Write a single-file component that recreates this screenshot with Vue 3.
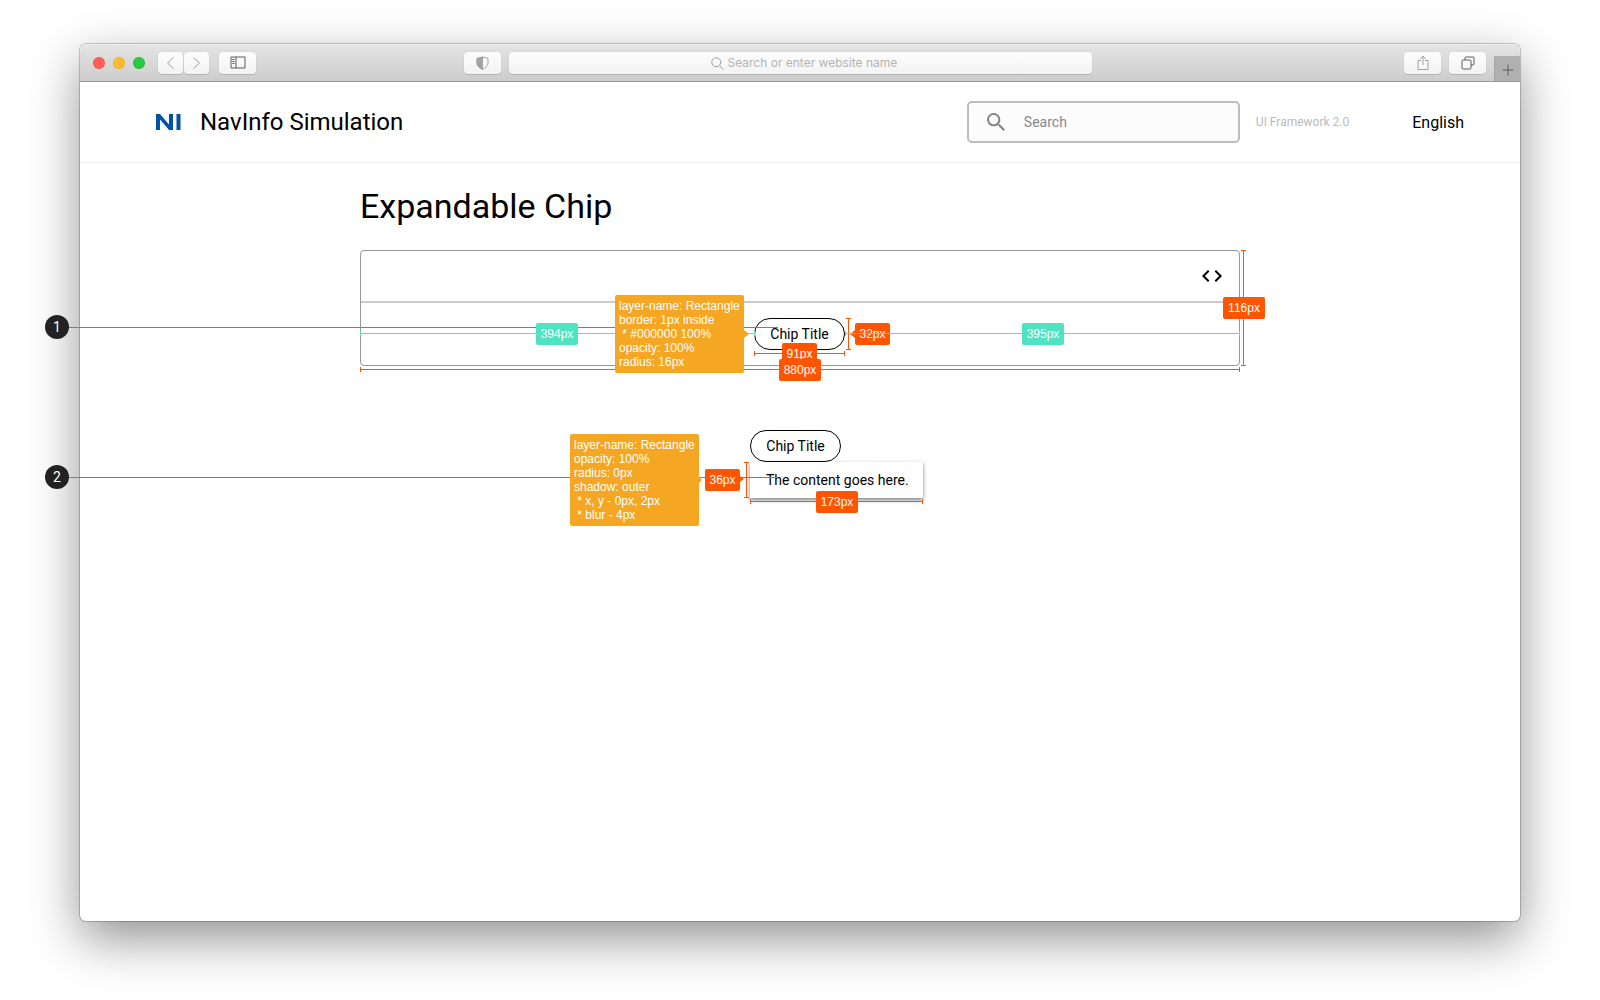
<script setup>
import { ref } from 'vue'

const address = ref('')
const query = ref('')
const expanded = ref(true)

const chipNote = ['layer-name: Rectangle', 'border: 1px inside', ' * #000000 100%', 'opacity: 100%', 'radius: 16px']
const contentNote = ['layer-name: Rectangle', 'opacity: 100%', 'radius: 0px', 'shadow: outer', ' * x, y - 0px, 2px', ' * blur - 4px']
</script>

<template>
  <div class="desktop">
    <div class="window">
      <div class="toolbar">
        <div class="group">
          <div class="lights">
            <button class="light red" type="button" aria-label="Close"></button>
            <button class="light yellow" type="button" aria-label="Minimise"></button>
            <button class="light green" type="button" aria-label="Zoom"></button>
          </div>
          <div class="nav">
            <button class="tool narrow" type="button" aria-label="Back">
              <svg width="9" height="14" viewBox="0 0 9 14"><path d="M7.500 1.500 1.500 7l6 5.500" /></svg>
            </button>
            <button class="tool narrow" type="button" aria-label="Forward">
              <svg width="9" height="14" viewBox="0 0 9 14"><path d="M1.500 1.500 7.500 7l-6 5.500" /></svg>
            </button>
          </div>
          <button class="tool dark" type="button" aria-label="Sidebar">
            <svg width="16" height="13" viewBox="0 0 16 13">
              <path d="M1 1h14v11H1zM6 1v11M2.500 3.500h2M2.500 5.500h2M2.500 7.500h2" />
            </svg>
          </button>
          <button class="tool privacy" type="button" aria-label="Privacy report">
            <svg width="13" height="14" viewBox="0 0 13 14">
              <path d="M6.500 1 12 2.500V7c0 3-2.500 5-5.500 6.300C3.500 12 1 10 1 7V2.500z" />
              <path class="solid" d="M6.500 1v12.300C3.500 12 1 10 1 7V2.500z" />
            </svg>
          </button>
        </div>
        <label class="address">
          <svg width="13" height="13" viewBox="0 0 13 13"><circle cx="5.300" cy="5.300" r="4.500" /><path d="m8.600 8.600 3.900 3.900" /></svg>
          <input v-model="address" type="text" placeholder="Search or enter website name" aria-label="Address" />
        </label>
        <div class="group end">
          <button class="tool" type="button" aria-label="Share">
            <svg width="12" height="16" viewBox="0 0 12 16"><path d="M4 5.500H1v9h10v-9H8M6 10V1.200M3.300 3.800 6 1.100l2.700 2.700" /></svg>
          </button>
          <button class="tool dark" type="button" aria-label="Show tabs">
            <svg width="14" height="14" viewBox="0 0 14 14">
              <rect x="1" y="4" width="9" height="9" rx="1" /><path d="M4 4V2q0-1 1-1h7q1 0 1 1v6q0 1-1 1h-2" />
            </svg>
          </button>
          <button class="new-tab" type="button" aria-label="New tab">
            <svg width="12" height="12" viewBox="0 0 12 12"><path d="M6 0.500v11M0.500 6h11" /></svg>
          </button>
        </div>
      </div>

      <header class="header">
        <svg class="logo" width="26" height="17" viewBox="0 0 26 17">
          <path d="M0 16V0h4l9 10.500V0h4v16h-4L4 5.500V16zM20.500 0h4v16h-4z" />
        </svg>
        <span class="brand">NavInfo Simulation</span>
        <label class="search">
          <svg width="18" height="18" viewBox="3 3 17.500 17.500">
            <path d="M15.500 14h-.79l-.28-.27A6.471 6.471 0 0 0 16 9.500 6.500 6.500 0 1 0 9.500 16c1.610 0 3.090-.59 4.230-1.570l.27.28v.79l5 4.990L20.490 19l-4.990-5zm-6 0C7.010 14 5 11.990 5 9.500S7.010 5 9.500 5 14 7.010 14 9.500 11.990 14 9.500 14z" />
          </svg>
          <input v-model="query" type="text" placeholder="Search" aria-label="Search" />
        </label>
        <span class="version">UI Framework 2.0</span>
        <button class="language" type="button">English</button>
      </header>

      <main class="page">
        <div class="board">
          <h1>Expandable Chip</h1>

          <section class="example">
            <div class="card">
              <div class="card-bar">
                <button class="code" type="button" aria-label="Show code">
                  <svg width="20" height="12" viewBox="2 6 20 12">
                    <path d="M9.400 16.600 4.800 12l4.600-4.600L8 6l-6 6 6 6 1.400-1.400zm5.200 0 4.600-4.600-4.600-4.600L16 6l6 6-6 6-1.400-1.400z" />
                  </svg>
                </button>
              </div>
              <div class="card-body">
                <button class="chip" type="button">Chip Title</button>
              </div>
            </div>

            <i class="lead first"></i>
            <b class="pin first">1</b>
            <i class="rule wide"></i>
            <i class="rule chip-width"></i>
            <i class="rule upright chip-height"></i>
            <i class="rule upright card-height"></i>
            <span class="tag chip-width">91px</span>
            <span class="tag card-width">880px</span>
            <span class="tag chip-height arrow-left">32px</span>
            <span class="tag card-height">116px</span>
            <i class="rule teal gap-left"></i>
            <i class="rule teal gap-right"></i>
            <span class="tag teal gap-left">394px</span>
            <span class="tag teal gap-right">395px</span>
            <div class="note first">
              <div v-for="line in chipNote" :key="line">{{ line }}</div>
            </div>
          </section>

          <section class="example expanded">
            <button class="chip" type="button" :aria-expanded="expanded" @click="expanded = !expanded">Chip Title</button>
            <div v-show="expanded" class="content">The content goes here.</div>

            <i class="lead second"></i>
            <b class="pin second">2</b>
            <i class="rule content-width"></i>
            <i class="rule upright content-height"></i>
            <div class="note second">
              <div v-for="line in contentNote" :key="line">{{ line }}</div>
            </div>
            <span class="tag content-width">173px</span>
            <span class="tag content-height arrow-right">36px</span>
          </section>
        </div>
      </main>
    </div>
  </div>
</template>

<style>
body {
  margin: 0;
  background: #fff;
}
</style>

<style scoped>
* {
  box-sizing: border-box;
}
.desktop {
  display: flex;
  min-height: 100vh;
  padding: 44px 80px 79px;
  overflow: hidden;
  font-family: Roboto, "Liberation Sans", sans-serif;
  color: #000;
}
button {
  margin: 0;
  padding: 0;
  border: 0;
  background: none;
  color: inherit;
  font: inherit;
}
input {
  min-width: 0;
  padding: 0;
  border: 0;
  outline: 0;
  background: none;
  font: inherit;
}
svg {
  display: block;
  flex: none;
}
.window {
  display: flex;
  flex: 1;
  flex-direction: column;
  min-width: 0;
  border-radius: 6px;
  background: #fff;
  box-shadow: 0 0 0 1px rgba(0, 0, 0, 0.2), 0 18px 50px rgba(0, 0, 0, 0.43);
}

/* Browser toolbar */
.toolbar {
  display: grid;
  grid-template-columns: minmax(0, 1fr) minmax(0, 583px) minmax(0, 1fr);
  align-items: center;
  height: 38px;
  border-bottom: 1px solid #989898;
  border-radius: 6px 6px 0 0;
  background: linear-gradient(#e4e4e4, #cdcdcd);
  box-shadow: inset 0 1px #f0f0f0;
}
.toolbar svg {
  fill: none;
  stroke: currentColor;
}
.group {
  display: flex;
  align-items: center;
  height: 37px;
}
.lights {
  display: flex;
  gap: 8px;
  margin: 0 13px;
}
.light {
  width: 12px;
  height: 12px;
  border: 1px solid rgba(0, 0, 0, 0.08);
  border-radius: 50%;
}
.red { background: #ff5f57; }
.yellow { background: #ffbd2e; }
.green { background: #28ca42; }
.nav {
  display: flex;
  gap: 1px;
  margin-right: 10px;
}
.tool {
  display: flex;
  align-items: center;
  justify-content: center;
  width: 37px;
  height: 22px;
  border-radius: 4px;
  background: linear-gradient(#fdfdfd, #f3f3f3);
  box-shadow: 0 0 1px rgba(0, 0, 0, 0.2), 0 1px rgba(0, 0, 0, 0.12);
  color: #a2a2a2;
}
.tool.narrow {
  width: 25px;
}
.tool.dark {
  color: #5c5c5c;
}
.privacy {
  margin: 0 8px 0 auto;
}
.toolbar .solid {
  fill: currentColor;
}
.address {
  display: flex;
  align-items: center;
  justify-content: center;
  gap: 4px;
  height: 22px;
  padding: 1px 0 0 10px;
  border-radius: 4px;
  background: linear-gradient(#fdfdfd, #f3f3f3);
  box-shadow: 0 0 1px rgba(0, 0, 0, 0.2), 0 1px rgba(0, 0, 0, 0.12);
  color: #9c9c9c;
  font: 12px/20px Inter, "Liberation Sans", sans-serif;
}
.address input {
  width: 172px;
}
.address input::placeholder {
  color: #b4b4b4;
}
.end {
  justify-content: flex-end;
  gap: 8px;
}
.new-tab {
  display: flex;
  align-items: center;
  justify-content: center;
  align-self: flex-end;
  width: 26px;
  height: 25px;
  padding-top: 2px;
  border-left: 1px solid #a4a4a4;
  background: #b0b0b0;
  color: #5c5c5c;
}

/* Site header */
.header {
  display: flex;
  align-items: center;
  height: 81px;
  padding: 0 56px 0 76px;
  border-bottom: 1px solid #eee;
}
.logo {
  fill: #0052a4;
}
.brand {
  margin-left: 18px;
  font-size: 24px;
  line-height: 32px;
}
.search {
  display: flex;
  align-items: center;
  gap: 19px;
  width: 273px;
  height: 42px;
  margin-left: auto;
  padding: 0 18px;
  border: 2px solid #bdbdbd;
  border-radius: 5px;
  background: #fcfcfc;
  font-size: 14px;
}
.search svg {
  fill: #838383;
}
.search input {
  flex: 1;
}
.search input::placeholder {
  color: #888;
}
.version {
  margin-left: 16px;
  color: #bbb;
  font-size: 12px;
}
.language {
  margin-left: 63px;
  font-size: 16px;
}

/* Page */
.page {
  flex: 1;
  padding-top: 23px;
}
.board {
  width: 880px;
  margin: 0 auto;
}
h1 {
  margin: 0 0 24px;
  font-size: 34px;
  font-weight: 400;
  line-height: 40px;
}
.example {
  position: relative;
  font-size: 14px;
  line-height: 20px;
}
.expanded {
  width: 173px;
  margin: 64px 0 0 390px;
}
.card {
  border: 1px solid #979797;
  border-radius: 4px;
}
.card-bar {
  display: flex;
  align-items: center;
  justify-content: flex-end;
  height: 52px;
  padding-right: 17px;
  border-bottom: 2px solid #cbcbcb;
}
.card-body {
  display: flex;
  justify-content: center;
  padding: 15px 16px 15px 15px;
}
.chip {
  display: block;
  width: 91px;
  height: 32px;
  border: 1px solid #000;
  border-radius: 16px;
  background: #fff;
}
.content {
  padding: 8px 16px;
  background: #fff;
  box-shadow: 0 2px 4px rgba(0, 0, 0, 0.5);
  white-space: nowrap;
}

/* Measurements drawn over the examples */
.lead,
.pin,
.rule,
.tag,
.note {
  position: absolute;
}
.lead {
  height: 1px;
  background: #ee4480;
}
.lead.first { top: 77px; left: -291px; width: 709px; }
.lead.second { top: 47px; left: -681px; width: 709px; }
.pin {
  width: 24px;
  height: 24px;
  border-radius: 50%;
  background: #222;
  color: #fff;
  font-weight: 400;
  line-height: 24px;
  text-align: center;
}
.pin.first { top: 65px; left: -315px; }
.pin.second { top: 35px; left: -705px; }

.rule {
  --ink: #ff5500;
  height: 5px;
  border: solid var(--ink);
  border-width: 0 1px;
  background: linear-gradient(var(--ink), var(--ink)) center / 100% 1px no-repeat;
}
.rule.upright {
  width: 5px;
  border-width: 1px 0;
  background-size: 1px 100%;
}
.rule.teal {
  --ink: #50e3c2;
}
.rule.wide { top: 117px; left: 0; width: 880px; }
.rule.chip-width { top: 101px; left: 394px; width: 91px; }
.rule.chip-height { top: 68px; left: 486px; height: 32px; }
.rule.card-height { top: 0; left: 881px; height: 116px; }
.rule.gap-left { top: 81px; left: 0; width: 395px; }
.rule.gap-right { top: 81px; left: 485px; width: 395px; }
.rule.content-width { top: 69px; left: 0; width: 173px; }
.rule.content-height { top: 32px; left: -6px; height: 36px; }

.tag,
.note {
  border-radius: 2px;
  color: #fff;
  font-family: "Liberation Sans", sans-serif;
  font-size: 12px;
}
.tag {
  width: 42px;
  height: 22px;
  background: #ff5500;
  line-height: 22px;
  text-align: center;
}
.tag.teal {
  background: #50e3c2;
}
.tag.chip-width { top: 93px; left: 422px; width: 35px; }
.tag.card-width { top: 109px; left: 419px; }
.tag.chip-height { top: 73px; left: 495px; width: 35px; }
.tag.card-height { top: 47px; left: 863px; }
.tag.gap-left { top: 73px; left: 176px; }
.tag.gap-right { top: 73px; left: 662px; }
.tag.content-width { top: 61px; left: 66px; }
.tag.content-height { top: 39px; left: -45px; width: 35px; }

.note {
  padding: 4px;
  width: 129px;
  background: #f5a623;
  line-height: 14px;
  white-space: pre;
}
.note.first { top: 45px; left: 255px; }
.note.second { top: 4px; left: -180px; }
.note::after,
.arrow-left::before,
.arrow-right::after {
  content: "";
  position: absolute;
  top: calc(50% - 4px);
  border: solid transparent;
  border-width: 4px 0 4px 5px;
}
.note::after {
  left: 100%;
  border-left-color: #f5a623;
}
.note.second::after {
  top: calc(50% - 3px);
  border-width: 3px 0 3px 3px;
}
.arrow-left::before {
  right: 100%;
  border-width: 4px 5px 4px 0;
  border-right-color: #ff5500;
}
.arrow-right::after {
  left: 100%;
  border-width: 3px 0 3px 4px;
  border-left-color: #ff5500;
}
</style>
